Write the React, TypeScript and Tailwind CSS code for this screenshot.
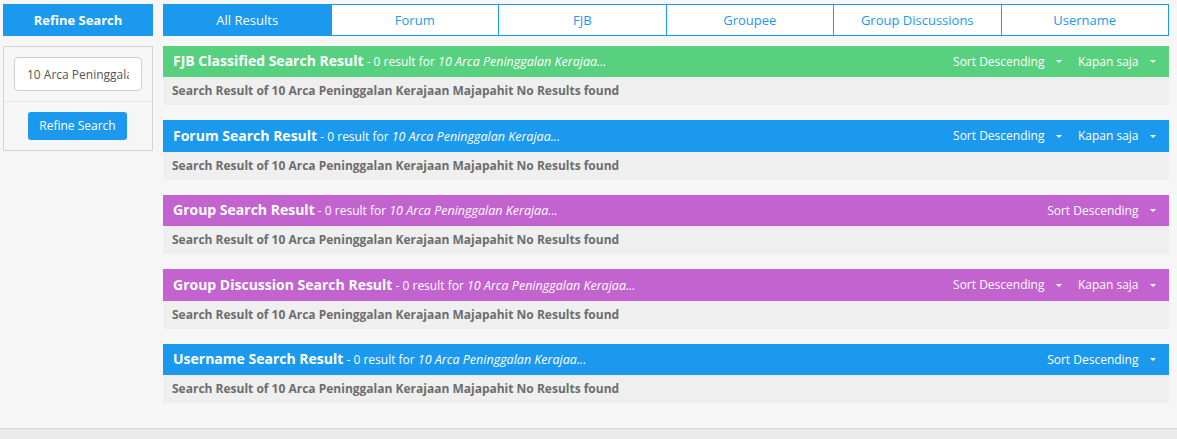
import { ReactNode } from "react";

const tabs = ["All Results", "Forum", "FJB", "Groupee", "Group Discussions", "Username"];

const results = [
    { title: "FJB Classified Search Result", color: "bg-[#57d080]", time: true },
    { title: "Forum Search Result", color: "bg-[#1b99ee]", time: true },
    { title: "Group Search Result", color: "bg-[#c263d0]", time: false },
    { title: "Group Discussion Search Result", color: "bg-[#c263d0]", time: true },
    { title: "Username Search Result", color: "bg-[#1b99ee]", time: false },
];

const Dropdown = ({ children }: { children: ReactNode }) => (
    <span className="ml-[15px] flex items-center pt-[0.5px] text-[12px] text-white">
        {children}
        <span className="ml-[11.5px] mr-[1px] h-0 w-0 border-x-[3px] border-t-[3px] border-x-transparent border-t-white" />
    </span>
);

const ResultPanel = ({ title, color, time }: { title: string; color: string; time: boolean }) => (
    <section className="mb-[15px]">
        <div className={`${color} flex h-[31.5px] items-center justify-between pl-[10px] pr-[12px] text-white`}>
            <div className="whitespace-nowrap pb-[1px] text-[12px]">
                <strong className="text-[14px] font-bold">{title}</strong>
                <span> - 0 result for </span>
                <em className="text-[12.5px]">10 Arca Peninggalan Kerajaa...</em>
            </div>
            <div className="flex">
                <Dropdown>Sort Descending</Dropdown>
                {time && <Dropdown>Kapan saja</Dropdown>}
            </div>
        </div>
        <div className="flex h-[28px] items-center bg-[#efefef] pl-[9px] text-[12px] font-bold text-[#6d6d6d]">
            Search Result of 10 Arca Peninggalan Kerajaan Majapahit No Results found
        </div>
    </section>
);

const App = () => {
    return (
        <div className="flex h-[439px] w-[1177px] flex-col overflow-hidden bg-[#f6f6f6] font-['Open_Sans',sans-serif]">
            <div className="flex flex-1 gap-[10px] pl-[3px] pr-[8px] pt-[4px]">
                <aside className="w-[150px]">
                    <div className="flex h-[32px] items-center justify-center bg-[#1b99ee] pt-[1px] text-[13px] font-bold text-white">
                        Refine Search
                    </div>
                    <div className="mt-[10px] h-[105px] border border-[#d4d4d4]">
                        <div className="flex h-[55px] items-center justify-center border-b border-[#e8e8e8]">
                            <input
                                readOnly
                                value="10 Arca Peninggalan Kerajaan Majapahit"
                                className="h-[34px] w-[128px] rounded-[4px] border border-[#cfcfcf] bg-white px-[12px] text-[12px] text-[#555555] outline-none"
                            />
                        </div>
                        <div className="flex justify-center pr-[1px] pt-[10px]">
                            <button className="h-[28px] w-[99px] rounded-[3px] bg-[#1b99ee] text-[12px] text-white">
                                Refine Search
                            </button>
                        </div>
                    </div>
                </aside>
                <main className="flex-1">
                    <nav className="mb-[9.9px] flex h-[32px] border border-[#1b99ee] bg-white">
                        {tabs.map((tab, i) => (
                            <a
                                key={tab}
                                className={
                                    i === 0
                                        ? "flex flex-1 items-center justify-center bg-[#1b99ee] pt-[1px] text-[13px] text-white"
                                        : "flex flex-1 items-center justify-center border-l border-[#1b99ee] pt-[1px] text-[13px] text-[#1b99ee]"
                                }
                            >
                                {tab}
                            </a>
                        ))}
                    </nav>
                    {results.map((r) => (
                        <ResultPanel key={r.title} {...r} />
                    ))}
                </main>
            </div>
            <footer className="h-[11px] border-t border-[#d6d6d6] bg-[#ebebeb]" />
        </div>
    );
};

export default App;
